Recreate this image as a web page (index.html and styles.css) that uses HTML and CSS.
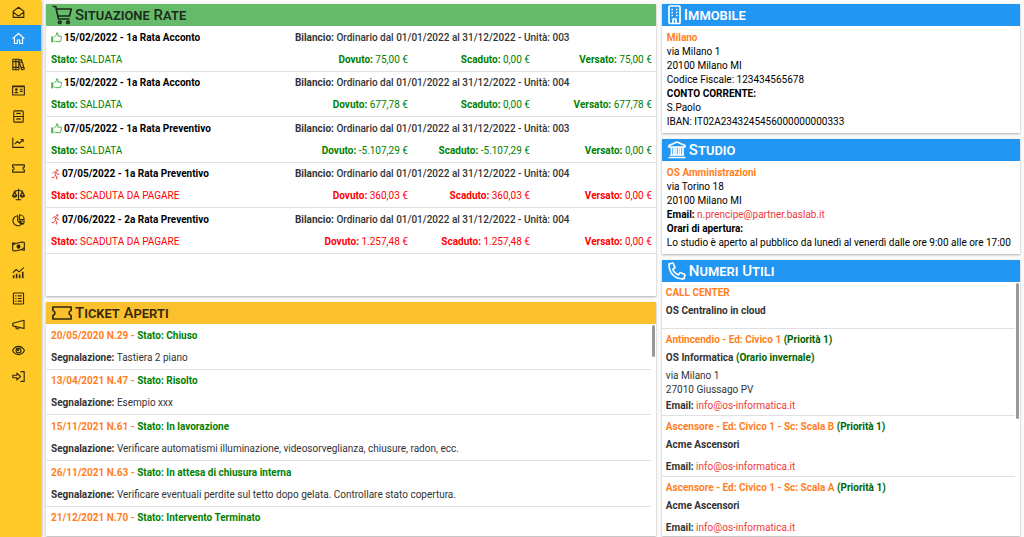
FILE: index.html
```html
<!DOCTYPE html>
<html lang="it">
<head>
    <meta charset="UTF-8">
    <meta name="viewport" content="width=device-width, initial-scale=1.0">
    <title>Condominio</title>
    <link rel="stylesheet" href="styles.css">
</head>
<body>
    <!-- Side navigation -->
    <nav class="sidebar">
        <a href="#" class="nav-item"><svg class="icon" viewBox="0 0 16 16"><path d="M1.500 6.500v7.500h13V6.500L8 1.500zM1.500 7.500l5 3.800q1.500 1 3 0l5-3.800"/></svg></a>
        <a href="#" class="nav-item active"><svg class="icon" viewBox="0 0 16 16"><path d="M.7 8.200 8 1.800l7.300 6.400M3 6.800v7.400h3.500V9.800h3v4.400H13V6.800"/></svg></a>
        <a href="#" class="nav-item"><svg class="icon" viewBox="0 0 16 16"><path d="M1 1.500h3.800v13H1zM4.800 1.500h3.700v13H4.800zM1 4.500h7.500M1 11.500h7.500M8.500 3l3-1 3.700 11.500-3 1-3.700-10M9.500 5.500l3-1M11.700 11.800l3-1"/></svg></a>
        <a href="#" class="nav-item"><svg class="icon" viewBox="0 0 16 16"><path d="M.8 2.500h14.400v11H.8zM.8 3.200h14.400M9.500 6.500h3.700M9.500 9h3.700"/><circle cx="5.300" cy="6.900" r="1.600" class="solid"/><path class="solid" d="M2.800 11.300q.3-2.100 2.500-2.100t2.500 2.100z"/></svg></a>
        <a href="#" class="nav-item"><svg class="icon" viewBox="0 0 16 16"><rect x="2.200" y="1" width="11.600" height="14" rx="1.200"/><path d="M2.200 8h11.600M6 5.300V4.200h4v1.100M6 12v-1.100h4V12"/></svg></a>
        <a href="#" class="nav-item"><svg class="icon" viewBox="0 0 16 16"><path d="M1 2v12h14M3.500 10l3.200-3.500 2.500 2.500 4.300-4.500M10.500 4.300h3.200v3"/></svg></a>
        <a href="#" class="nav-item"><svg class="icon" viewBox="0 0 16 16"><path d="M.8 3.500h14.400v2.800q-1.700.2-1.700 1.700t1.700 1.700v2.800H.8V9.700Q2.500 9.500 2.500 8T.8 6.300z"/></svg></a>
        <a href="#" class="nav-item"><svg class="icon" viewBox="0 0 16 16"><path d="M8 1v13.500M4.500 14.500h7M2.500 4.200 8 2.800l5.500 1.400M.6 9.700l2.600-5 2.600 5zM.6 9.700q2.600 3.500 5.200 0M10.200 9.700l2.600-5 2.600 5zM10.200 9.700q2.600 3.500 5.200 0"/></svg></a>
        <a href="#" class="nav-item"><svg class="icon" viewBox="0 0 16 16"><path d="M7 2.200a6.100 6.100 0 1 0 4.500 10.500L7 8.500zM9.200.9v5.800h5.700A5.800 5.800 0 0 0 9.200.9zM9.200 8.600h6q-.2 2.300-1.800 4z"/></svg></a>
        <a href="#" class="nav-item"><svg class="icon" viewBox="0 0 16 16"><path d="M.8 3.500q3.700 1.400 7.200 0t7.200-.5v9.500q-3.700-1.400-7.200 0t-7.200.5zM1 6.200q2 0 2.300-2.300M15 9.700q-2 0-2.300 2.300"/><ellipse cx="8" cy="8" rx="2.400" ry="2.900" class="solid"/></svg></a>
        <a href="#" class="nav-item"><svg class="icon" viewBox="0 0 16 16"><path d="M2 15v-3.500M5.700 15V9.500M9.400 15v-4.500M13.200 15V7" class="bars"/><path d="M1 8.300l4.200-4 3.500 3L14.500 2"/></svg></a>
        <a href="#" class="nav-item"><svg class="icon" viewBox="0 0 16 16"><rect x="1.800" y="1.200" width="12.400" height="13.600" rx="1"/><path d="M4 4.700h1.500M7 4.700h5M4 8h1.500M7 8h5M4 11.300h1.500M7 11.300h5"/></svg></a>
        <a href="#" class="nav-item"><svg class="icon" viewBox="0 0 16 16"><path d="M1 6.500v3.200L14.800 13V2.700zM4.500 10.500q0 3.200 2.500 3 1.800-.2 1.500-2"/></svg></a>
        <a href="#" class="nav-item"><svg class="icon" viewBox="0 0 16 16"><path d="M.7 8Q3.300 3 8 3t7.300 5q-2.600 5-7.300 5T.7 8z"/><circle cx="8" cy="8" r="3"/><circle cx="7.500" cy="7.500" r=".8"/></svg></a>
        <a href="#" class="nav-item"><svg class="icon" viewBox="0 0 16 16"><path d="M10.500 2H15v12h-4.500M1 6.500h5V3.800L10.500 8 6 12.200V9.500H1z"/></svg></a>
    </nav>

    <main class="dashboard">
        <div class="column column-left">
            <!-- Installments -->
            <section class="panel panel-rates">
                <h2 class="panel-title green"><svg class="title-icon" viewBox="0 0 20 20"><path d="M.5 1.500h3.200L6.500 14h11M4.300 4h15l-1.800 7H5.900"/><circle cx="7.800" cy="17.300" r="1.300"/><circle cx="16" cy="17.300" r="1.300"/></svg>Situazione Rate</h2>
                <div class="rows">
                    <div class="row paid">
                        <div class="rate-name"><svg class="state-icon" viewBox="0 0 16 16"><path d="M4.500 7.500 8 4V1.300q2.500-.5 2.300 2L9.800 6H15v3l-1.300 5H6.500l-2-1.200"/><path class="hand" d="M.3 6.500h3v8.500h-3z"/></svg>15/02/2022 - 1a Rata Acconto</div>
                        <div class="budget"><b>Bilancio:</b> Ordinario dal 01/01/2022 al 31/12/2022 - Unità: 003</div>
                        <div class="status"><b>Stato:</b> SALDATA</div>
                        <div class="amount"><b>Dovuto:</b> 75,00 €</div>
                        <div class="amount"><b>Scaduto:</b> 0,00 €</div>
                        <div class="amount"><b>Versato:</b> 75,00 €</div>
                    </div>
                    <div class="row paid">
                        <div class="rate-name"><svg class="state-icon" viewBox="0 0 16 16"><path d="M4.500 7.500 8 4V1.300q2.500-.5 2.300 2L9.800 6H15v3l-1.300 5H6.500l-2-1.200"/><path class="hand" d="M.3 6.500h3v8.500h-3z"/></svg>15/02/2022 - 1a Rata Acconto</div>
                        <div class="budget"><b>Bilancio:</b> Ordinario dal 01/01/2022 al 31/12/2022 - Unità: 004</div>
                        <div class="status"><b>Stato:</b> SALDATA</div>
                        <div class="amount"><b>Dovuto:</b> 677,78 €</div>
                        <div class="amount"><b>Scaduto:</b> 0,00 €</div>
                        <div class="amount"><b>Versato:</b> 677,78 €</div>
                    </div>
                    <div class="row paid">
                        <div class="rate-name"><svg class="state-icon" viewBox="0 0 16 16"><path d="M4.500 7.500 8 4V1.300q2.500-.5 2.300 2L9.800 6H15v3l-1.300 5H6.500l-2-1.200"/><path class="hand" d="M.3 6.500h3v8.500h-3z"/></svg>07/05/2022 - 1a Rata Preventivo</div>
                        <div class="budget"><b>Bilancio:</b> Ordinario dal 01/01/2022 al 31/12/2022 - Unità: 003</div>
                        <div class="status"><b>Stato:</b> SALDATA</div>
                        <div class="amount"><b>Dovuto:</b> -5.107,29 €</div>
                        <div class="amount"><b>Scaduto:</b> -5.107,29 €</div>
                        <div class="amount"><b>Versato:</b> 0,00 €</div>
                    </div>
                    <div class="row overdue">
                        <div class="rate-name"><svg class="state-icon narrow" viewBox="0 0 13 16"><circle cx="9" cy="2" r="1.200"/><path d="M2 6.500 4.500 4l3 .5-2 4.500 3 2-.5 4M5 10.500 3.800 12.500H.8M7.700 5l1.500 2.700H12"/></svg>07/05/2022 - 1a Rata Preventivo</div>
                        <div class="budget"><b>Bilancio:</b> Ordinario dal 01/01/2022 al 31/12/2022 - Unità: 004</div>
                        <div class="status"><b>Stato:</b> SCADUTA DA PAGARE</div>
                        <div class="amount"><b>Dovuto:</b> 360,03 €</div>
                        <div class="amount"><b>Scaduto:</b> 360,03 €</div>
                        <div class="amount"><b>Versato:</b> 0,00 €</div>
                    </div>
                    <div class="row overdue">
                        <div class="rate-name"><svg class="state-icon narrow" viewBox="0 0 13 16"><circle cx="9" cy="2" r="1.200"/><path d="M2 6.500 4.500 4l3 .5-2 4.500 3 2-.5 4M5 10.500 3.800 12.500H.8M7.700 5l1.500 2.700H12"/></svg>07/06/2022 - 2a Rata Preventivo</div>
                        <div class="budget"><b>Bilancio:</b> Ordinario dal 01/01/2022 al 31/12/2022 - Unità: 004</div>
                        <div class="status"><b>Stato:</b> SCADUTA DA PAGARE</div>
                        <div class="amount"><b>Dovuto:</b> 1.257,48 €</div>
                        <div class="amount"><b>Scaduto:</b> 1.257,48 €</div>
                        <div class="amount"><b>Versato:</b> 0,00 €</div>
                    </div>
                </div>
            </section>

            <!-- Open tickets -->
            <section class="panel panel-tickets">
                <h2 class="panel-title yellow"><svg class="title-icon" viewBox="0 0 20 20"><path d="M.9 4h18.200v3.500q-2 .5-2 2.500t2 2.500V16H.9v-3.500q2-.5 2-2.500t-2-2.500z"/></svg>Ticket Aperti</h2>
                <div class="scroller">
                    <div class="rows">
                        <div class="row">
                            <div class="ticket-head">20/05/2020 N.29 - <span class="state">Stato: Chiuso</span></div>
                            <div class="ticket-text"><b>Segnalazione:</b> Tastiera 2 piano</div>
                        </div>
                        <div class="row">
                            <div class="ticket-head">13/04/2021 N.47 - <span class="state">Stato: Risolto</span></div>
                            <div class="ticket-text"><b>Segnalazione:</b> Esempio xxx</div>
                        </div>
                        <div class="row">
                            <div class="ticket-head">15/11/2021 N.61 - <span class="state">Stato: In lavorazione</span></div>
                            <div class="ticket-text"><b>Segnalazione:</b> Verificare automatismi illuminazione, videosorveglianza, chiusure, radon, ecc.</div>
                        </div>
                        <div class="row">
                            <div class="ticket-head">26/11/2021 N.63 - <span class="state">Stato: In attesa di chiusura interna</span></div>
                            <div class="ticket-text"><b>Segnalazione:</b> Verificare eventuali perdite sul tetto dopo gelata. Controllare stato copertura.</div>
                        </div>
                        <div class="row">
                            <div class="ticket-head">21/12/2021 N.70 - <span class="state">Stato: Intervento Terminato</span></div>
                        </div>
                    </div>
                </div>
                <div class="thumb thumb-short"></div>
            </section>
        </div>

        <div class="column column-right">
            <section class="panel">
                <h2 class="panel-title blue"><svg class="title-icon building" viewBox="0 0 13 20"><rect x="1" y="1" width="11" height="17.500" rx="1"/><path d="M3.500 4.500H5M8 4.500h1.500M3.500 7.500H5M8 7.500h1.500M3.500 10.500H5M8 10.500h1.500M5 18.300V14h3v4.300"/></svg>Immobile</h2>
                <div class="info">
                    <div class="name">Milano</div>
                    <div>via Milano 1</div>
                    <div>20100 Milano MI</div>
                    <div>Codice Fiscale: 123434565678</div>
                    <div><b>CONTO CORRENTE:</b></div>
                    <div>S.Paolo</div>
                    <div>IBAN: IT02A2343245456000000000333</div>
                </div>
            </section>

            <section class="panel">
                <h2 class="panel-title blue"><svg class="title-icon bank" viewBox="0 0 18 20"><path d="M1 7V5.500L9 2l8 3.500V7zM3.500 7v7.500M6 7v7.500M8 7v7.500M10.500 7v7.500M12.500 7v7.500M15 7v7.500M2 15h14M.5 17.500h17"/></svg>Studio</h2>
                <div class="info">
                    <div class="name">OS Amministrazioni</div>
                    <div>via Torino 18</div>
                    <div>20100 Milano MI</div>
                    <div><b>Email:</b> <a href="mailto:n.prencipe@partner.baslab.it">n.prencipe@partner.baslab.it</a></div>
                    <div><b>Orari di apertura:</b></div>
                    <div>Lo studio è aperto al pubblico da lunedì al venerdì dalle ore 9:00 alle ore 17:00</div>
                </div>
            </section>

            <!-- Useful numbers -->
            <section class="panel panel-numbers">
                <h2 class="panel-title blue"><svg class="title-icon bank" viewBox="0 0 18 20"><path d="M1 3l4-1 2 4.500-2.300 2q1.800 3.800 5.500 5.500l2-2.500 4.800 2-1 4.200Q9 18.500 4.500 13.500 1 9.500 1 3z"/></svg>Numeri Utili</h2>
                <div class="scroller">
                    <div class="contact short">
                        <div class="contact-title">CALL CENTER</div>
                        <div class="contact-name">OS Centralino in cloud</div>
                    </div>
                    <div class="contact">
                        <div class="contact-title">Antincendio - Ed: Civico 1 <span class="priority">(Priorità 1)</span></div>
                        <div class="contact-name">OS Informatica <span class="priority">(Orario invernale)</span></div>
                        <div class="address">via Milano 1<br>27010 Giussago PV</div>
                        <div class="contact-mail"><b>Email:</b> <a href="mailto:info@os-informatica.it">info@os-informatica.it</a></div>
                    </div>
                    <div class="contact">
                        <div class="contact-title">Ascensore - Ed: Civico 1 - Sc: Scala B <span class="priority">(Priorità 1)</span></div>
                        <div class="contact-name">Acme Ascensori</div>
                        <div class="address"></div>
                        <div class="contact-mail"><b>Email:</b> <a href="mailto:info@os-informatica.it">info@os-informatica.it</a></div>
                    </div>
                    <div class="contact">
                        <div class="contact-title">Ascensore - Ed: Civico 1 - Sc: Scala A <span class="priority">(Priorità 1)</span></div>
                        <div class="contact-name">Acme Ascensori</div>
                        <div class="address"></div>
                        <div class="contact-mail"><b>Email:</b> <a href="mailto:info@os-informatica.it">info@os-informatica.it</a></div>
                    </div>
                </div>
                <div class="thumb thumb-long"></div>
            </section>
        </div>
    </main>
</body>
</html>
```
FILE: styles.css
```css
* {
    box-sizing: border-box;
}

body {
    display: flex;
    height: 100vh;
    margin: 0;
    overflow: hidden;
    font-family: Roboto, Arial, sans-serif;
    font-size: 10px;
    line-height: 14px;
    color: #333;
    background-color: #fafafa;
}

a {
    color: #ef3a3a;
    text-decoration: none;
}

svg {
    fill: none;
    stroke: currentColor;
    stroke-width: 1.4;
    stroke-linejoin: round;
}

/* Sidebar */
.sidebar {
    flex: none;
    width: 41px;
    background-color: #ffca28;
    box-shadow: 1px 0 3px rgba(0, 0, 0, 0.3);
}

.nav-item {
    display: flex;
    align-items: center;
    justify-content: center;
    height: 26px;
    padding-right: 4px;
    color: #33290a;
}

.nav-item:first-child {
    height: 25px;
}

.nav-item.active {
    color: #fff;
    background-color: #2196f3;
}

.icon {
    width: 13px;
    height: 13px;
}

.icon .solid {
    fill: currentColor;
    stroke: none;
}

.icon .bars {
    stroke-width: 2;
}

/* Dashboard */
.dashboard {
    flex: 1;
    display: flex;
    gap: 6px;
    min-width: 0;
    padding: 4px 4px 1px 5px;
}

.column {
    display: flex;
    flex-direction: column;
    gap: 6px;
    min-width: 0;
}

.column-left {
    flex: 63;
}

.column-right {
    flex: 37;
}

.panel {
    position: relative;
    display: flex;
    flex-direction: column;
    background-color: #fff;
    box-shadow: 0 1px 2px rgba(0, 0, 0, 0.3);
}

.panel-rates {
    flex: 5;
    min-height: 0;
}

.panel-tickets {
    flex: 4;
    min-height: 0;
}

.panel-numbers {
    flex: 1;
    min-height: 0;
}

.panel-title {
    flex: none;
    display: flex;
    align-items: center;
    gap: 3px;
    height: 22px;
    margin: 0;
    padding-left: 6px;
    font-size: 15px;
    font-weight: 500;
    font-variant: small-caps;
}

.green {
    color: #1a2b1b;
    background-color: #66bb6a;
}

.yellow {
    color: #33290a;
    background-color: #fbc02d;
}

.blue {
    color: #fff;
    background-color: #2196f3;
}

.title-icon {
    width: 20px;
    height: 20px;
    stroke-width: 1.7;
}

.title-icon.building {
    width: 13px;
}

.title-icon.bank {
    width: 18px;
}

/* Lists */
.scroller {
    flex: 1;
    min-height: 0;
    padding-right: 5px;
    overflow-y: auto;
    scrollbar-width: none;
}

.rows {
    display: flex;
    flex-direction: column;
    height: 228px;
}

.row {
    flex: 1;
    display: grid;
    grid-template-columns: 2fr 1fr 1fr 1fr;
    grid-template-rows: 22px 22px;
    align-items: center;
    border-bottom: 1px solid #e0e0e0;
}

.row > div {
    padding: 1px 4px 0 5px;
}

.rate-name {
    display: flex;
    align-items: center;
    gap: 2px;
    font-weight: bold;
    color: #000;
}

.state-icon {
    width: 11px;
    height: 11px;
    color: #4caf50;
}

.state-icon.narrow {
    width: 9px;
    color: #e53935;
}

.state-icon .hand {
    fill: currentColor;
    stroke: none;
}

.budget {
    grid-column: span 3;
    font-weight: 500;
}

.amount {
    text-align: right;
}

.paid .status,
.paid .amount {
    color: #008000;
}

.overdue .status,
.overdue .amount {
    color: #f00;
}

.ticket-head,
.ticket-text {
    grid-column: 1 / -1;
}

.ticket-head {
    font-weight: bold;
    color: #ff7f1e;
}

.state {
    color: #008000;
}

/* Property and office info */
.info {
    padding: 5px 5px 4px;
    color: #000;
}

.name,
.contact-title {
    font-weight: bold;
    color: #ff7f1e;
}

/* Contacts */
.contact {
    padding: 2px 0 0 4px;
    line-height: 18px;
    border-bottom: 1px solid #e0e0e0;
}

.contact:last-child {
    border-bottom: none;
}

.contact.short {
    padding-bottom: 8px;
}

.contact-name {
    font-weight: bold;
}

.priority {
    color: #006400;
}

.address {
    min-height: 4px;
    padding-top: 2px;
    line-height: 14px;
}

/* Scroll position marker over the list */
.thumb {
    position: absolute;
    top: 23px;
    right: 1px;
    width: 3px;
    border-radius: 2px;
    background-color: #999;
}

.thumb-short {
    height: 32px;
}

.thumb-long {
    height: 136px;
}
```
